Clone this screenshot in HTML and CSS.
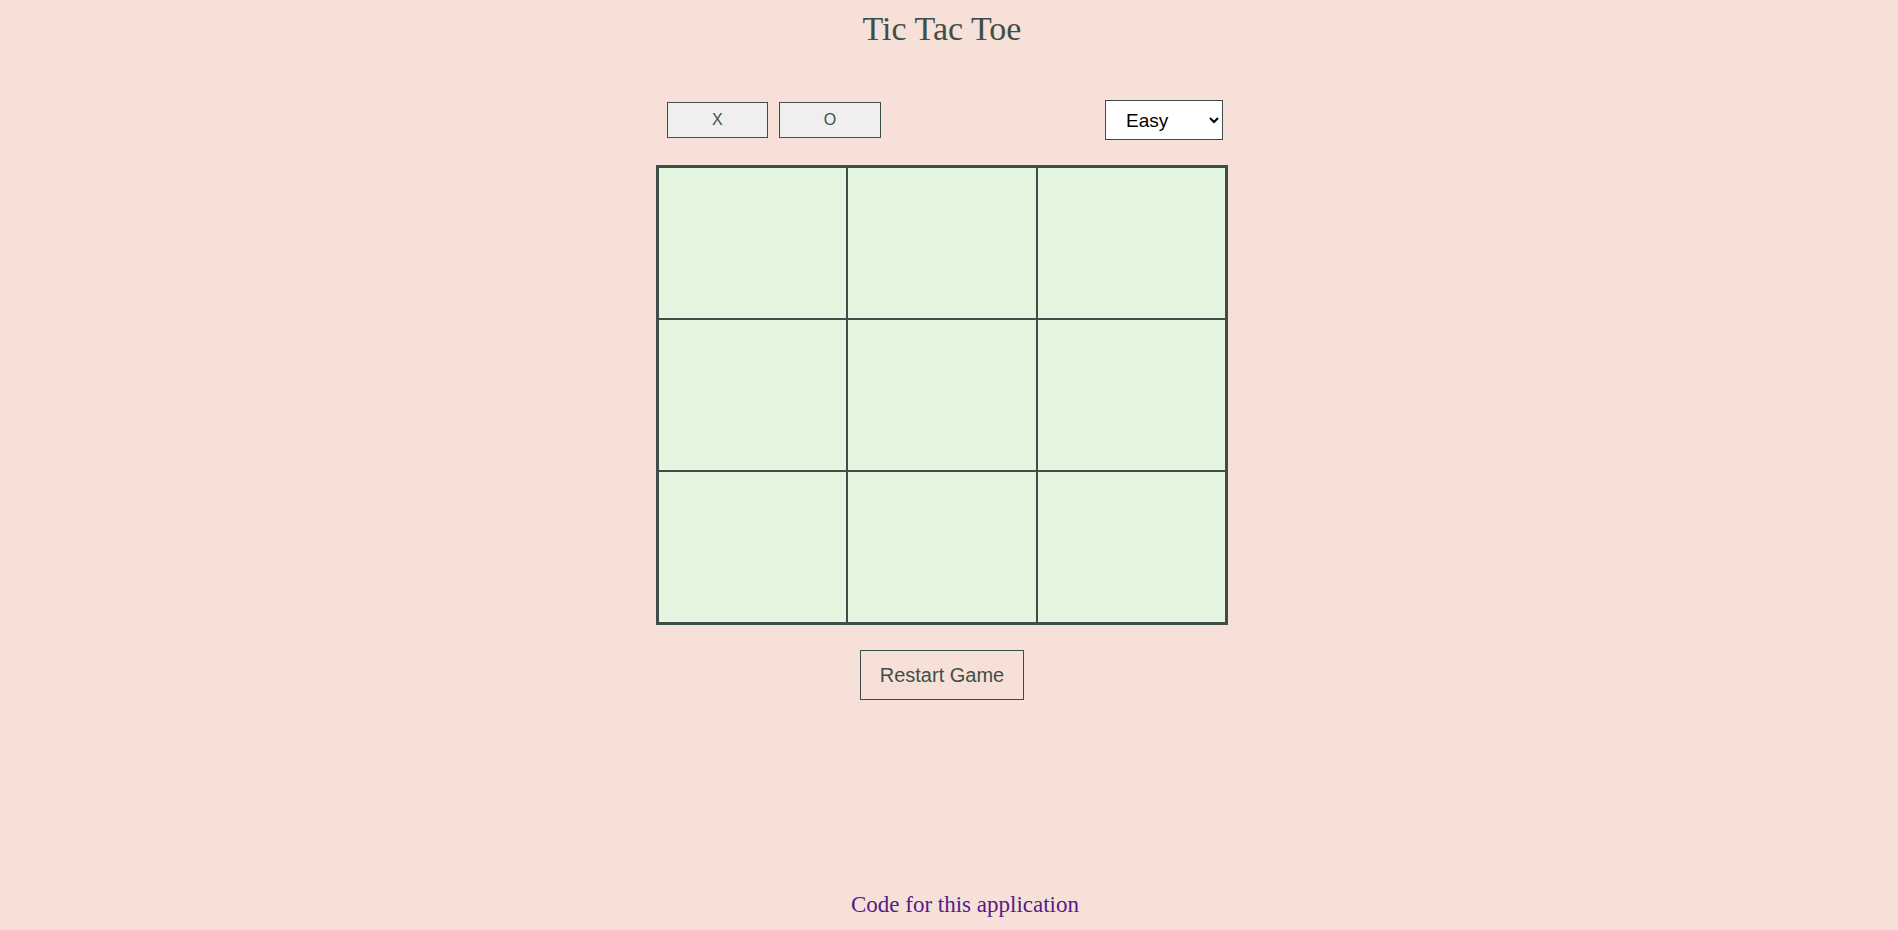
FILE: index.html
```html
<!DOCTYPE html>
<html lang="en">
<head>
<meta charset="utf-8">
<title>Tic Tac Toe</title>
<link rel="stylesheet" href="styles.css">
</head>
<body>
<main class="app">
  <h1 class="title">Tic Tac Toe</h1>
  <div class="controls">
    <div class="marks">
      <button class="mark">X</button>
      <button class="mark">O</button>
    </div>
    <select class="level">
      <option>Easy</option>
      <option>Medium</option>
      <option>Hard</option>
    </select>
  </div>
  <div class="board">
    <div class="cell"></div><div class="cell"></div><div class="cell"></div>
    <div class="cell"></div><div class="cell"></div><div class="cell"></div>
    <div class="cell"></div><div class="cell"></div><div class="cell"></div>
  </div>
  <button class="restart">Restart Game</button>
</main>
<footer class="footer">
  <a class="code-link" href="#">Code for this application</a>
</footer>
</body>
</html>
```
FILE: styles.css
```css
html, body {
  margin: 0;
  padding: 0;
}
body {
  background: #f7e0d7;
  min-height: 100vh;
  display: flex;
  flex-direction: column;
  align-items: center;
  color: #3e4f4a;
  font-family: "Liberation Serif", "Times New Roman", serif;
}
.app {
  width: 572px;
  margin-right: 14px;
  display: flex;
  flex-direction: column;
  align-items: center;
}
.title {
  margin: 0;
  padding-top: 9px;
  height: 40px;
  line-height: 40px;
  font-size: 34px;
  font-weight: normal;
  color: #3e4f4a;
}
.controls {
  margin-top: 51px;
  width: 100%;
  box-sizing: border-box;
  padding: 0 5px 0 11px;
  height: 40px;
  display: flex;
  align-items: center;
  justify-content: space-between;
}
.marks {
  display: flex;
  gap: 11px;
}
.mark {
  height: 36px;
  padding: 0 44px;
  border: 1px solid #3e4f4a;
  background: #efefef;
  color: #3e4f4a;
  font-family: "Liberation Sans", Arial, sans-serif;
  font-size: 16px;
  border-radius: 0;
}
.level {
  width: 118px;
  height: 40px;
  border: 1px solid #3e4f4a;
  background: #ffffff;
  color: #000000;
  font-family: "Liberation Sans", Arial, sans-serif;
  font-size: 19px;
  padding: 0 4px 0 16px;
  border-radius: 0;
}
.board {
  margin-top: 25px;
  width: 572px;
  box-sizing: border-box;
  border: 2px solid #3e4f4a;
  display: grid;
  grid-template-columns: repeat(3, 1fr);
  grid-template-rows: repeat(3, 152px);
}
.cell {
  background: #e4f5e0;
  border: 1px solid #3e4f4a;
}
.restart {
  margin-top: 25px;
  height: 50px;
  padding: 0 19px;
  border: 1px solid #3e4f4a;
  background: transparent;
  color: #3e4f4a;
  font-family: "Liberation Sans", Arial, sans-serif;
  font-size: 20px;
  border-radius: 0;
}
.footer {
  margin-top: auto;
  padding: 0 0 10px 32px;
  line-height: 26px;
}
.code-link {
  font-family: "Liberation Serif", "Times New Roman", serif;
  font-size: 23px;
  color: #551a8b;
  text-decoration: none;
}
```
